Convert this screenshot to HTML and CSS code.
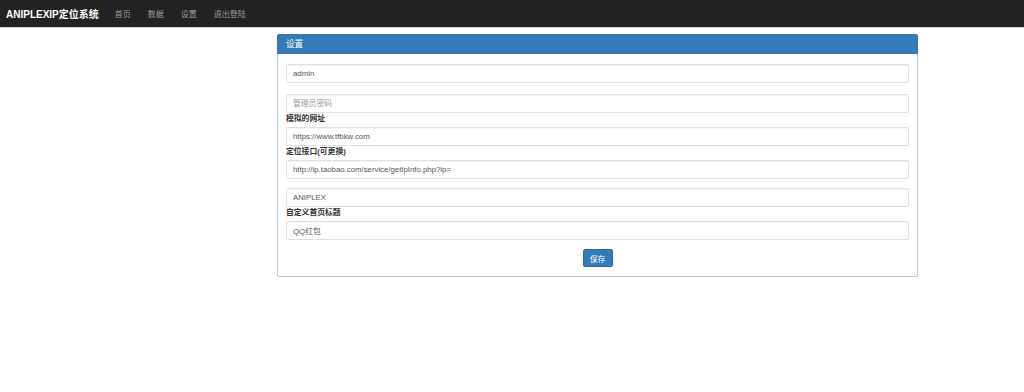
FILE: index.html
```html
<!DOCTYPE html>
<html lang="zh-CN">

<head>
	<meta charset="UTF-8">
	<title>ANIPLEXIP定位系统</title>

	<link rel="stylesheet" href="styles.css">
</head>

<body>

	<nav class="navbar">
		<a class="brand" href="#">ANIPLEXIP定位系统</a>
		<ul class="nav">
			<li><a href="#">首页</a></li>
			<li><a href="#">数据</a></li>
			<li><a href="#">设置</a></li>
			<li><a href="#">退出登陆</a></li>
		</ul>
	</nav>

	<main>
		<div class="panel">
			<div class="panel_heading">设置</div>
			<form class="panel_body">
				<input class="field gap" type="text" value="admin">
				<input class="field" type="password" placeholder="管理员密码">
				<label>模拟的网址</label>
				<input class="field" type="text" value="https://www.tfbkw.com">
				<label>定位接口(可更换)</label>
				<input class="field gap_small" type="text" value="http://ip.taobao.com/service/getIpInfo.php?ip=">
				<input class="field" type="text" value="ANIPLEX">
				<label>自定义首页标题</label>
				<input class="field gap_small" type="text" value="QQ红包">
				<div class="actions">
					<button type="button" class="btn">保存</button>
				</div>
			</form>
		</div>
	</main>

</body>

</html>
```

FILE: styles.css
```css
body {
	margin: 0;
	background-color: #fff;
	font-family: "Liberation Sans", "Noto Sans CJK SC", sans-serif;
	font-size: 8px;
	color: #333;
}

.navbar {
	display: flex;
	align-items: center;
	height: 27px;
	background-color: #222;
	border-bottom: 1px solid #d2d2d2;
}

.brand {
	padding: 0 16px 0 6px;
	color: #fff;
	font-size: 10px;
	font-weight: bold;
	text-decoration: none;
}

.nav {
	display: flex;
	list-style: none;
	margin: 0;
	padding: 0;
	gap: 17px;
}

.nav a {
	color: #9d9d9d;
	font-size: 8px;
	text-decoration: none;
}

main {
	padding: 6px 0 0 277px;
}

.panel {
	width: 639px;
	border: 1px solid #b4c8da;
	border-radius: 2px;
	box-shadow: 0 1px 1px rgba(0, 0, 0, 0.05);
}

.panel_heading {
	height: 20px;
	line-height: 20px;
	padding: 0 9px;
	margin: -1px -1px 0;
	background-color: #337ab7;
	color: #fff;
	font-size: 8.6px;
	border-radius: 2px 2px 0 0;
}

.panel_body {
	display: flex;
	flex-direction: column;
	padding: 10px 8px 9px;
}

.field {
	box-sizing: border-box;
	height: 19px;
	width: 100%;
	margin: 0;
	padding: 0 6px;
	border: 1px solid #e0e0e0;
	border-radius: 2px;
	font-family: inherit;
	font-size: 7.8px;
	color: #555;
	box-shadow: inset 0 1px 1px rgba(0, 0, 0, 0.04);
}

.field::placeholder {
	color: #999;
}

.gap {
	margin-bottom: 11px;
}

.gap_small {
	margin-bottom: 9px;
}

label {
	display: block;
	line-height: 11px;
	margin-bottom: 3px;
	font-weight: bold;
	font-size: 7.8px;
	color: #333;
}

.actions {
	text-align: center;
}

.btn {
	width: 30px;
	height: 18px;
	padding: 0;
	border: 1px solid #2e6da4;
	border-radius: 2px;
	background-color: #337ab7;
	color: #fff;
	font-family: inherit;
	font-size: 7.8px;
}
```
